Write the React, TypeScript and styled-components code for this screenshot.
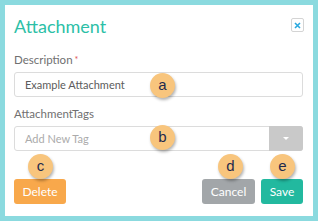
import React from 'react';
import styled, { createGlobalStyle } from 'styled-components';

const GlobalStyle = createGlobalStyle`
    html, body {
        margin: 0;
        padding: 0;
        background: #8bdadf;
        font-family: Lato, "Liberation Sans", sans-serif;
    }
`;

const Card = styled.section`
    box-sizing: border-box;
    margin: 5px;
    width: 308px;
    height: 211px;
    background: #fff;
    padding: 6px 10px 0 9px;
    display: flex;
    flex-direction: column;
`;

const Header = styled.div`
    display: flex;
    justify-content: space-between;
    align-items: center;
    height: 28px;
`;

const Title = styled.h2`
    margin: 0;
    font-size: 18px;
    font-weight: 400;
    color: #2dbfa7;
    padding-top: 1px;
`;

const CloseBtn = styled.button`
    box-sizing: border-box;
    width: 13px;
    height: 14px;
    padding: 0;
    margin-right: -1px;
    border: 1px solid #d4d4d4;
    border-radius: 2px;
    background: #fff;
    display: flex;
    align-items: center;
    justify-content: center;
`;

const Field = styled.div`
    display: flex;
    flex-direction: column;
    margin-top: ${(p: { $top: number }) => p.$top}px;
`;

const Label = styled.label`
    font-size: 11.5px;
    color: #707070;
    line-height: 14px;
    margin-bottom: 5px;
`;

const Required = styled.span`
    color: #e0524f;
    font-size: 9px;
    vertical-align: top;
    margin-left: 2px;
`;

const InputBox = styled.div`
    position: relative;
    box-sizing: border-box;
    height: 25px;
    border: 1px solid #dcdcdc;
    border-radius: 3px;
    display: flex;
    align-items: center;
    padding-left: 10px;
    font-size: 11px;
    color: ${(p: { $placeholder?: boolean }) => (p.$placeholder ? '#ababab' : '#5c5c5c')};
`;

const SelectArrow = styled.div`
    position: absolute;
    top: -1px;
    right: -1px;
    bottom: -1px;
    width: 34px;
    background: #c9c9c9;
    border-radius: 0 3px 3px 0;
    display: flex;
    align-items: center;
    justify-content: center;
`;

const Caret = styled.span`
    width: 0;
    height: 0;
    border-left: 3px solid transparent;
    border-right: 3px solid transparent;
    border-top: 3px solid #fff;
`;

// orange letter markers laid over the form
const Badge = styled.span`
    position: absolute;
    width: 25px;
    height: 25px;
    border-radius: 50%;
    background: #f8c57d;
    color: #1f2a4d;
    font-family: "Liberation Sans", Arial, sans-serif;
    font-size: 15px;
    line-height: 24px;
    text-align: center;
    box-shadow: 1px 2px 3px rgba(0, 0, 0, 0.3);
    left: ${(p: { $left: number; $top: number }) => p.$left}px;
    top: ${(p) => p.$top}px;
`;

const Footer = styled.div`
    display: flex;
    justify-content: space-between;
    margin-top: 28px;
`;

const Group = styled.div`
    display: flex;
    gap: 6px;
`;

const Button = styled.button`
    position: relative;
    box-sizing: border-box;
    height: 25px;
    width: ${(p: { $bg: string; $w: number }) => p.$w}px;
    padding: 0;
    border: none;
    border-radius: 3px;
    background: ${(p) => p.$bg};
    color: #fff;
    font-family: Lato, "Liberation Sans", sans-serif;
    font-size: 12px;
`;

export default function App() {
    return (
        <>
            <GlobalStyle />
            <Card>
                <Header>
                    <Title>Attachment</Title>
                    <CloseBtn>
                        <svg width="7" height="7" viewBox="0 0 7 7">
                            <path d="M1 1L6 6M6 1L1 6" stroke="#2aa9df" strokeWidth="1.6" />
                        </svg>
                    </CloseBtn>
                </Header>
                <Field $top={14}>
                    <Label>
                        Description<Required>*</Required>
                    </Label>
                    <InputBox>
                        Example Attachment
                        <Badge $left={135} $top={0}>a</Badge>
                    </InputBox>
                </Field>
                <Field $top={10}>
                    <Label>AttachmentTags</Label>
                    <InputBox $placeholder>
                        Add New Tag
                        <SelectArrow>
                            <Caret />
                        </SelectArrow>
                        <Badge $left={135} $top={-2}>b</Badge>
                    </InputBox>
                </Field>
                <Footer>
                    <Button $bg="#f8a84b" $w={52}>
                        Delete
                        <Badge $left={14} $top={-25}>c</Badge>
                    </Button>
                    <Group>
                        <Button $bg="#a2a6a9" $w={53}>
                            Cancel
                            <Badge $left={16} $top={-25}>d</Badge>
                        </Button>
                        <Button $bg="#22b99f" $w={42}>
                            Save
                            <Badge $left={9} $top={-25}>e</Badge>
                        </Button>
                    </Group>
                </Footer>
            </Card>
        </>
    );
}
